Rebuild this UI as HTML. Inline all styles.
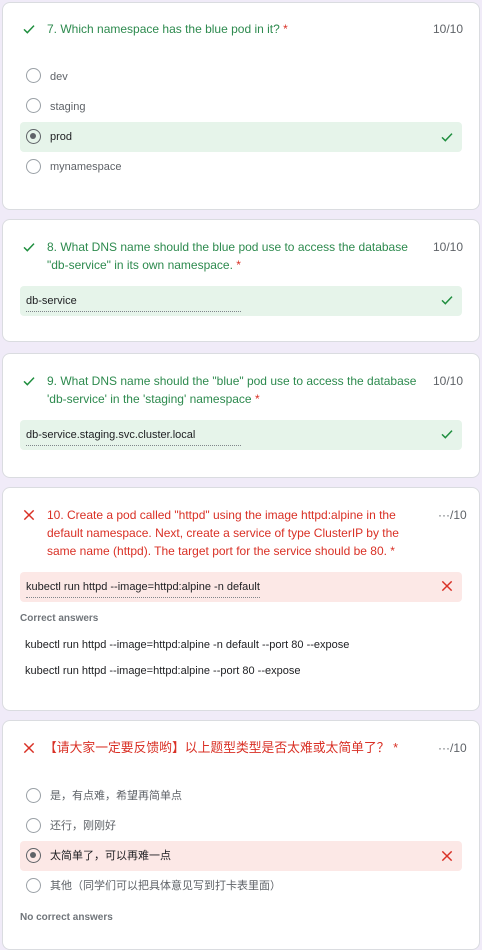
<!DOCTYPE html>
<html><head><meta charset="utf-8"><style>
*{margin:0;padding:0;box-sizing:border-box}
body{width:482px;height:936px;background:#f0ebf8;position:relative;overflow:hidden;font-family:"Liberation Sans","Noto Sans CJK SC",sans-serif;color:#202124}
.card{position:absolute;left:2px;width:478px;background:#fff;border-radius:8px;border:1px solid #dadce0}
.a{position:absolute;white-space:nowrap}
.t{font-size:12px;line-height:18px;white-space:normal}
.g{color:#2d8a4e}.r{color:#d93025}
.sc{font-size:12px;color:#5f6368}
.band{position:absolute;left:20px;width:442px;height:30px;border-radius:4px}
.gb{background:#e6f4ea}.rb{background:#fce8e6}
.rad{position:absolute;left:26px;width:15px;height:15px;border:1.5px solid #9aa0a6;border-radius:50%}
.rad.on{border-color:#5f6368}
.rad.on::after{content:"";position:absolute;left:3px;top:3px;width:6px;height:6px;border-radius:50%;background:#5f6368}
.opt{position:absolute;left:50px;font-size:11px;color:#5f6368;white-space:nowrap;line-height:14px}
.opt.b{color:#202124}
.ans{position:absolute;left:26px;font-size:11px;line-height:14px;white-space:nowrap;border-bottom:1px dotted #80868b;padding-bottom:3px}
.ic{position:absolute}
.lbl{position:absolute;left:20px;font-size:10px;color:#70757a;font-weight:bold}
</style></head><body>
<svg width="0" height="0" style="position:absolute"><defs>
<symbol id="ck" viewBox="0 0 24 24"><path d="M4.5 12.5l5 5 10-10.5" fill="none" stroke="#1e8e3e" stroke-width="2.2"/></symbol>
<symbol id="x" viewBox="0 0 24 24"><path d="M5 5l14 14M19 5L5 19" fill="none" stroke="#d93025" stroke-width="2.2"/></symbol>
</defs></svg>

<div class="card" style="top:2px;height:208px"></div>
<svg class="ic" style="left:21px;top:21px" width="16" height="16"><use href="#ck"/></svg>
<div class="a t g" style="left:47px;top:20px">7. Which namespace has the blue pod in it? <span class="r">*</span></div>
<div class="a sc" style="left:433px;top:22px">10/10</div>
<div class="rad" style="top:68px"></div><div class="opt" style="top:70px">dev</div>
<div class="rad" style="top:98px"></div><div class="opt" style="top:100px">staging</div>
<div class="band gb" style="top:122px"></div>
<div class="rad on" style="top:129px"></div><div class="opt b" style="top:130px">prod</div>
<svg class="ic" style="left:439px;top:129px" width="16" height="16"><use href="#ck"/></svg>
<div class="rad" style="top:159px"></div><div class="opt" style="top:160px">mynamespace</div>

<div class="card" style="top:219px;height:123px"></div>
<svg class="ic" style="left:21px;top:239px" width="16" height="16"><use href="#ck"/></svg>
<div class="a t g" style="left:47px;top:238px;width:375px">8. What DNS name should the blue pod use to access the database "db-service" in its own namespace. <span class="r">*</span></div>
<div class="a sc" style="left:433px;top:240px">10/10</div>
<div class="band gb" style="top:286px"></div>
<div class="ans" style="top:294px;width:215px">db-service</div>
<svg class="ic" style="left:439px;top:292px" width="16" height="16"><use href="#ck"/></svg>

<div class="card" style="top:353px;height:125px"></div>
<svg class="ic" style="left:21px;top:373px" width="16" height="16"><use href="#ck"/></svg>
<div class="a t g" style="left:47px;top:372px;width:380px">9. What DNS name should the "blue" pod use to access the database 'db-service' in the 'staging' namespace <span class="r">*</span></div>
<div class="a sc" style="left:433px;top:374px">10/10</div>
<div class="band gb" style="top:420px"></div>
<div class="ans" style="top:428px;width:215px">db-service.staging.svc.cluster.local</div>
<svg class="ic" style="left:439px;top:426px" width="16" height="16"><use href="#ck"/></svg>

<div class="card" style="top:487px;height:224px"></div>
<svg class="ic" style="left:21px;top:507px" width="16" height="16"><use href="#x"/></svg>
<div class="a t r" style="left:47px;top:506px;width:372px">10. Create a pod called "httpd" using the image httpd:alpine in the default namespace. Next, create a service of type ClusterIP by the same name (httpd). The target port for the service should be 80. *</div>
<div class="a sc" style="left:438px;top:508px">···/10</div>
<div class="band rb" style="top:572px"></div>
<div class="ans" style="top:580px">kubectl run httpd --image=httpd:alpine -n default</div>
<svg class="ic" style="left:439px;top:578px" width="16" height="16"><use href="#x"/></svg>
<div class="lbl" style="top:613px">Correct answers</div>
<div class="opt b" style="left:25px;top:638px">kubectl run httpd --image=httpd:alpine -n default --port 80 --expose</div>
<div class="opt b" style="left:25px;top:664px">kubectl run httpd --image=httpd:alpine --port 80 --expose</div>

<div class="card" style="top:720px;height:230px"></div>
<svg class="ic" style="left:21px;top:740px" width="16" height="16"><use href="#x"/></svg>
<div class="a t r" style="left:44px;top:739px;font-size:12.8px">【请大家一定要反馈哟】以上题型类型是否太难或太简单了？ *</div>
<div class="a sc" style="left:438px;top:741px">···/10</div>
<div class="rad" style="top:788px"></div><div class="opt" style="top:789px">是，有点难，希望再简单点</div>
<div class="rad" style="top:818px"></div><div class="opt" style="top:819px">还行，刚刚好</div>
<div class="band rb" style="top:841px"></div>
<div class="rad on" style="top:848px"></div><div class="opt b" style="top:849px">太简单了，可以再难一点</div>
<svg class="ic" style="left:439px;top:848px" width="16" height="16"><use href="#x"/></svg>
<div class="rad" style="top:878px"></div><div class="opt" style="top:879px">其他（同学们可以把具体意见写到打卡表里面）</div>
<div class="lbl" style="top:912px">No correct answers</div>
</body></html>
